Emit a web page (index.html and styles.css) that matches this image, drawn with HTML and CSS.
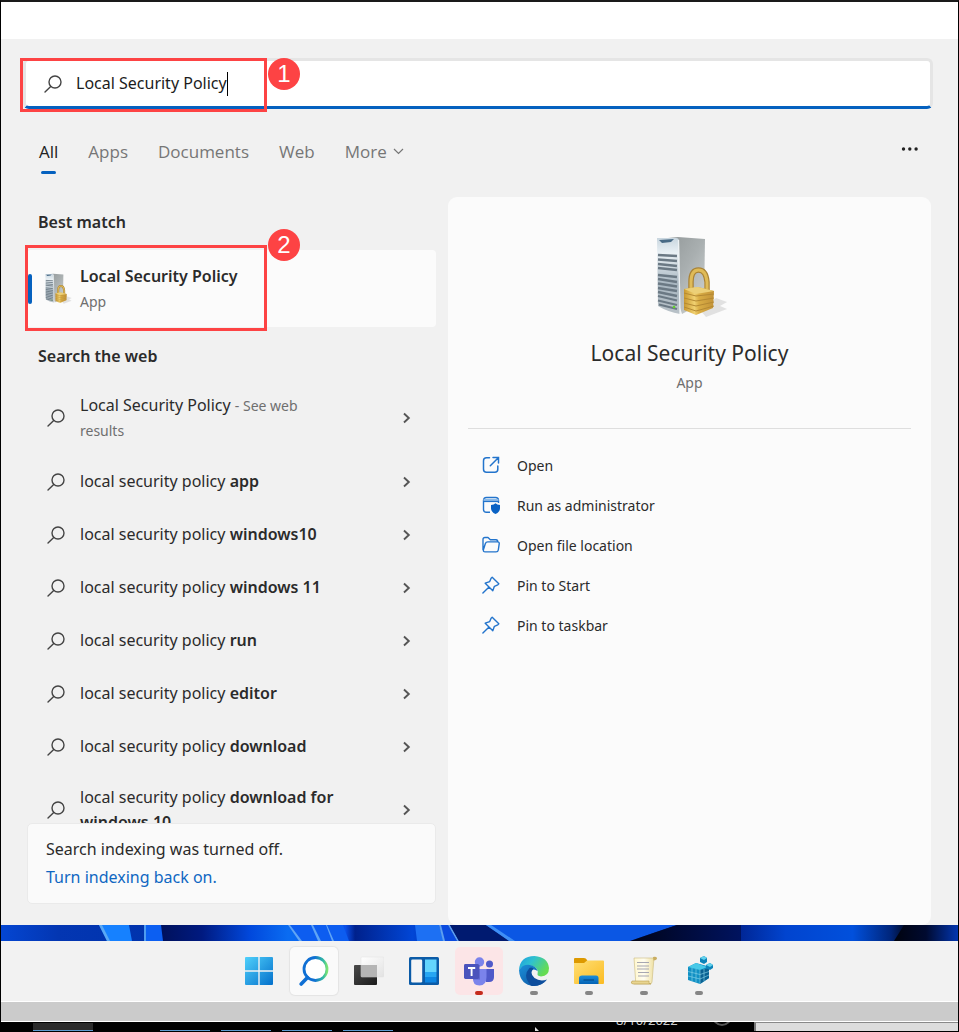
FILE: index.html
```html
<!DOCTYPE html>
<html lang="en">
<head>
<meta charset="utf-8">
<title>Search</title>
<link rel="stylesheet" href="styles.css">
</head>
<body>
<svg class="defs" aria-hidden="true">
  <defs>
    <linearGradient id="gSide" x1="0" y1="0" x2="1" y2="1"><stop offset="0" stop-color="#8d9394"/><stop offset=".5" stop-color="#a9afb0"/><stop offset="1" stop-color="#d3d7d8"/></linearGradient>
    <linearGradient id="gFront" x1="0" y1="0" x2="0" y2="1"><stop offset="0" stop-color="#c9d6df"/><stop offset=".2" stop-color="#eaf1f5"/><stop offset=".6" stop-color="#a9b7c1"/><stop offset="1" stop-color="#b9c2c8"/></linearGradient>
    <linearGradient id="gLock" x1="0" y1="0" x2="1" y2="0"><stop offset="0" stop-color="#c9982f"/><stop offset=".35" stop-color="#f0d070"/><stop offset=".5" stop-color="#d9ad45"/><stop offset="1" stop-color="#c39338"/></linearGradient>
    <linearGradient id="gWin" x1="0" y1="0" x2="1" y2="1"><stop offset="0" stop-color="#4fd0fb"/><stop offset="1" stop-color="#0470cb"/></linearGradient>
    <linearGradient id="gFind" x1="0" y1="0" x2="1" y2="0"><stop offset=".45" stop-color="#0f6fd4"/><stop offset=".85" stop-color="#35bca0"/><stop offset="1" stop-color="#7be374"/></linearGradient>
    <linearGradient id="gDark" x1="0" y1="0" x2="1" y2="1"><stop offset="0" stop-color="#4a4a4a"/><stop offset="1" stop-color="#1b1b1b"/></linearGradient>
    <linearGradient id="gPane" x1="0" y1="0" x2="1" y2="1"><stop offset="0" stop-color="#fff"/><stop offset="1" stop-color="#e2e2e2"/></linearGradient>
    <linearGradient id="gEdgeTop" x1="0" y1="0" x2="1" y2=".5"><stop offset="0" stop-color="#1b9de2"/><stop offset=".45" stop-color="#2fc1cf"/><stop offset="1" stop-color="#66dc52"/></linearGradient>
    <linearGradient id="gEdgeLow" x1="0" y1="0" x2="1" y2="1"><stop offset="0" stop-color="#1b8fd8"/><stop offset="1" stop-color="#0c4f9c"/></linearGradient>
    <linearGradient id="gFolder" x1="0" y1="0" x2="1" y2="1"><stop offset="0" stop-color="#ffdf74"/><stop offset="1" stop-color="#fbbb22"/></linearGradient>
    <linearGradient id="gTray" x1="0" y1="0" x2="0" y2="1"><stop offset="0" stop-color="#1c8edb"/><stop offset="1" stop-color="#0462b4"/></linearGradient>
    <linearGradient id="gPaper" x1="0" y1="0" x2="1" y2="0"><stop offset="0" stop-color="#fff7cf"/><stop offset=".5" stop-color="#fffdf0"/><stop offset="1" stop-color="#efe0a2"/></linearGradient>
    <linearGradient id="gSky" x1="0" y1="0" x2="1" y2="0">
      <stop offset="0" stop-color="#0446d2"/><stop offset=".06" stop-color="#0336b2"/><stop offset=".16" stop-color="#0033ad"/><stop offset=".168" stop-color="#00115c"/><stop offset=".21" stop-color="#001a80"/><stop offset=".26" stop-color="#0148dc"/><stop offset=".3" stop-color="#0a6cf2"/><stop offset=".36" stop-color="#0a4fe8"/><stop offset=".37" stop-color="#00218c"/><stop offset=".43" stop-color="#0146d6"/><stop offset=".48" stop-color="#00218a"/><stop offset=".53" stop-color="#0c62ea"/><stop offset=".66" stop-color="#0a3ecb"/><stop offset=".7" stop-color="#00135c"/><stop offset=".75" stop-color="#00187a"/><stop offset=".82" stop-color="#0144cf"/><stop offset=".89" stop-color="#0150dc"/><stop offset=".93" stop-color="#00257a"/><stop offset=".95" stop-color="#00030f"/><stop offset="1" stop-color="#0336b0"/>
    </linearGradient>
    <linearGradient id="gDusk" x1="0" y1="0" x2="1" y2="0"><stop offset="0" stop-color="#000418"/><stop offset=".5" stop-color="#000b3c"/><stop offset="1" stop-color="#00135f"/></linearGradient>
    <linearGradient id="gNight" x1="0" y1="0" x2="1" y2="0"><stop offset="0" stop-color="#00030f"/><stop offset=".5" stop-color="#000a30"/><stop offset="1" stop-color="#0336b0"/></linearGradient>
    <symbol id="glass" viewBox="0 0 18 18"><g fill="none" stroke="currentColor" stroke-width="1.400" stroke-linecap="round"><circle cx="11" cy="7" r="6"/><path d="M6.700 11.400 1 17"/></g></symbol>
    <symbol id="next" viewBox="0 0 9 12"><path d="M2 1.500 6.800 6 2 10.500" fill="none" stroke="currentColor" stroke-width="1.900"/></symbol>
    <symbol id="server" viewBox="0 0 72 84">
      <path d="M44 74 60 62 71 66 64 70 71 73 50 81Z" fill="#d5d5d5" opacity=".7"/>
      <path d="M2 3 22 1 49 3 48 66 26 78Z" fill="url(#gSide)"/>
      <path d="M1 2 20 2Q23 2 23 5L24 78Q12 76 2 70Z" fill="url(#gFront)"/>
      <path d="M3 4 18 3 15 6 6 7Z" fill="#486a85"/>
      <g stroke="#6b7984" stroke-width="2.300"><path d="M2 19 21 20M2 23.500 21 25M2 28 21 30M2 32 21 34"/><path d="M2 39 21 41M2 43 21 46M2 47.500 21 50.500M2 52 21 55M2 56 21 60M2 60 21 64.500M2 64.500 21 69M3 68.500 21 73"/></g>
      <path d="M22.500 4 24 78" stroke="#eef2f4" stroke-width="1.300"/>
      <circle cx="18" cy="71" r="1.300" fill="#62d22c"/>
      <path d="M35 58V46Q35 34 42.500 34T51 46V56" fill="none" stroke="#a98336" stroke-width="5.500"/>
      <path d="M35 58V46Q35 34 42.500 34T51 46V56" fill="none" stroke="#dfbb58" stroke-width="3"/>
      <path d="M28 53 42 51 58 55 57 72 40 79 28 74Z" fill="url(#gLock)"/>
      <path d="M28 57 40 60 58 58M28 62 40 65 58 62M28 67 40 70 58 66M28 71 40 75 58 70" fill="none" stroke="#b48933" stroke-width="1"/>
      <path d="M28 53 42 51 58 55 40 58Z" fill="#ecd078"/>
    </symbol>
    <symbol id="pin" viewBox="0 0 18 18"><path d="M10.200 1.200 16.800 7.800 15.800 8.900 12.400 10.300 10.800 14.800 3.200 7.200 7.700 5.600 9.100 2.200ZM6.800 11.200.9 17.100" fill="none" stroke="currentColor" stroke-width="1.400" stroke-linejoin="round" stroke-linecap="round"/></symbol>
  </defs>
</svg>

<div class="screen">
  <div class="topstrip"></div>

  <main class="panel">
    <div class="searchwrap">
      <label class="searchbox">
        <svg class="glass"><use href="#glass"/></svg>
        <input class="query" type="text" value="Local Security Policy" aria-label="Search">
        <span class="caret"></span>
      </label>
      <span class="mark mark-search"></span>
      <span class="step step-search">1</span>
    </div>

    <nav class="tabs">
      <button class="tab active">All</button>
      <button class="tab">Apps</button>
      <button class="tab">Documents</button>
      <button class="tab">Web</button>
      <button class="tab">More <svg class="down" viewBox="0 0 11 7"><path d="M1 1 5.500 5.500 10 1" fill="none" stroke="currentColor" stroke-width="1.200"/></svg></button>
      <button class="dots" aria-label="Options"><svg viewBox="0 0 18 4"><circle cx="2.500" cy="2" r="1.700"/><circle cx="8.800" cy="2" r="1.700"/><circle cx="15.100" cy="2" r="1.700"/></svg></button>
    </nav>

    <div class="columns">
      <section class="left">
        <h2 class="heading">Best match</h2>
        <div class="best">
          <button class="bestitem">
            <svg class="smallserver"><use href="#server"/></svg>
            <span class="besttext"><strong>Local Security Policy</strong><small>App</small></span>
          </button>
          <span class="mark mark-best"></span>
          <span class="step step-best">2</span>
        </div>
        <h2 class="heading">Search the web</h2>
        <div class="results">
          <button class="row"><svg class="glass"><use href="#glass"/></svg><span>Local Security Policy <small>- See web results</small></span><svg class="next"><use href="#next"/></svg></button>
          <button class="row"><svg class="glass"><use href="#glass"/></svg><span>local security policy <b>app</b></span><svg class="next"><use href="#next"/></svg></button>
          <button class="row"><svg class="glass"><use href="#glass"/></svg><span>local security policy <b>windows10</b></span><svg class="next"><use href="#next"/></svg></button>
          <button class="row"><svg class="glass"><use href="#glass"/></svg><span>local security policy <b>windows 11</b></span><svg class="next"><use href="#next"/></svg></button>
          <button class="row"><svg class="glass"><use href="#glass"/></svg><span>local security policy <b>run</b></span><svg class="next"><use href="#next"/></svg></button>
          <button class="row"><svg class="glass"><use href="#glass"/></svg><span>local security policy <b>editor</b></span><svg class="next"><use href="#next"/></svg></button>
          <button class="row"><svg class="glass"><use href="#glass"/></svg><span>local security policy <b>download</b></span><svg class="next"><use href="#next"/></svg></button>
          <button class="row"><svg class="glass"><use href="#glass"/></svg><span>local security policy <b>download for windows 10</b></span><svg class="next"><use href="#next"/></svg></button>
        </div>
        <div class="notice">
          <p>Search indexing was turned off.</p>
          <a href="#">Turn indexing back on.</a>
        </div>
      </section>

      <section class="card">
        <svg class="bigserver"><use href="#server"/></svg>
        <h1>Local Security Policy</h1>
        <p class="kind">App</p>
        <div class="actions">
          <button class="action"><svg viewBox="0 0 18 18"><path d="M7.500 1.700H4.500Q1.500 1.700 1.500 4.700V13.200Q1.500 16.200 4.500 16.200H12.800Q15.800 16.200 15.800 13.200V10M11 1.500H16.500V7M16.300 1.700 8.300 9.700" fill="none" stroke="currentColor" stroke-width="1.500" stroke-linecap="round"/></svg>Open</button>
          <button class="action"><svg viewBox="0 0 18 18"><path d="M8 16.300H4.400Q1.500 16.300 1.500 13.400V4.400Q1.500 1.500 4.400 1.500H13.600Q16.500 1.500 16.500 4.400V7" fill="none" stroke="currentColor" stroke-width="1.400"/><path d="M1.500 4H16.500" stroke="#8dbbe8" stroke-width="2"/><path d="M1.500 5.500H16.500" stroke="currentColor" stroke-width="1.200"/><path d="M13.500 7.300Q15 8.800 18 9V12Q18 16 13.500 18Q9 16 9 12V9Q12 8.800 13.500 7.300Z" fill="#0a62c4"/></svg>Run as administrator</button>
          <button class="action"><svg viewBox="0 0 18 18"><path d="M1 14V3.500Q1 1.500 3 1.500H6L8.300 3.700H14Q15.800 3.700 15.800 5.900M5.800 5.900H15.500Q17.500 5.900 17.200 7.800L16.300 14Q16 15.900 14 15.900H3.200Q1 15.900 1.400 13.700L3.300 7.800Q3.900 5.900 5.800 5.900Z" fill="none" stroke="currentColor" stroke-width="1.400" stroke-linejoin="round"/></svg>Open file location</button>
          <button class="action"><svg><use href="#pin"/></svg>Pin to Start</button>
          <button class="action"><svg><use href="#pin"/></svg>Pin to taskbar</button>
        </div>
      </section>
    </div>
  </main>

  <svg class="wallpaper" viewBox="0 0 957 16" preserveAspectRatio="none">
    <rect width="957" height="16" fill="url(#gSky)"/>
    <path d="M98 0H128L131 16H106Z" fill="#1681ff"/><path d="M98 0H101L109 16H106Z" fill="#5aa8f4"/>
    <path d="M143 0H160L162 16H143Z" fill="#0c5ff2"/><path d="M143 0H145V16H143Z" fill="#4f9cf0"/>
    <path d="M287 0H342L348 16H299Z" fill="#0d5df0"/><path d="M287 0H289L301 16H298ZM310 0H312L320 16H317ZM325 0H326L333 16H331Z" fill="#60a5f5"/>
    <path d="M414 0H438L443 16H416Z" fill="#1d70f3"/><path d="M438 0H447L456 16H443Z" fill="#0a4adf"/><path d="M438 0H440L444 16H442ZM447 0H449L458 16H456Z" fill="#5d9ff0"/>
    <path d="M449 0H485L509 16H458Z" fill="#001a70"/>
    <path d="M485 0H676Q655 7 629 16H509Z" fill="#0b57e4"/><path d="M485 0H490L514 16H508Z" fill="#3f8ff5"/>
    <path d="M676 0H740V16H629Q655 7 676 0Z" fill="url(#gDusk)"/>
    <path d="M903 0H957V16H893Z" fill="url(#gNight)"/>
  </svg>

  <footer class="taskbar">
    <button class="task" aria-label="Start"><svg viewBox="0 0 30 30"><path d="M1 2Q1 1 2 1H14.300V14.300H1ZM15.700 1H28Q29 1 29 2V14.300H15.700ZM1 15.700H14.300V29H2Q1 29 1 28ZM15.700 15.700H29V28Q29 29 28 29H15.700Z" fill="url(#gWin)"/></svg></button>
    <button class="task lit" aria-label="Search"><svg viewBox="0 0 30 30"><circle cx="16.500" cy="13" r="11.500" fill="#fff" stroke="url(#gFind)" stroke-width="2.800"/><path d="M8.500 21.500 2.200 28" stroke="#0f6fd4" stroke-width="3.600" stroke-linecap="round"/></svg></button>
    <button class="task" aria-label="Task view"><svg viewBox="0 0 30 30"><rect x="0" y="9" width="23" height="20" rx="1" fill="url(#gDark)"/><rect x="7" y="1" width="23" height="20" rx="1" fill="url(#gPane)" stroke="#e0e0e0" stroke-width=".5"/><path d="M7 9H23V21H7Z" fill="#b5b5b5"/></svg></button>
    <button class="task" aria-label="Widgets"><svg viewBox="0 0 30 30"><rect x="0" y="1" width="30" height="28" rx="1.500" fill="#0b5ba7"/><rect x="2.200" y="3.500" width="11" height="23" rx="1.300" fill="#f5f5f5"/><path d="M16 3.500H27.500V16H16Z" fill="#64d5fd"/><path d="M16 16H27.500V21H16Z" fill="#26a6f3"/><path d="M16 21H27.500V26.500H16Z" fill="#0d86e3"/></svg></button>
    <button class="task alert" aria-label="Teams"><svg viewBox="0 0 32 30"><circle cx="26.500" cy="8" r="3.500" fill="#5059c9"/><path d="M23 13H31V21Q31 26 26 26H23Z" fill="#5059c9"/><circle cx="16.500" cy="6" r="4.700" fill="#7b83eb"/><path d="M10 13H23.500V21Q23.500 29.500 16.500 29.500T10 22Z" fill="#7b83eb"/><path d="M10 9H17V23.500H10Z" fill="#464eb8" opacity=".5"/><rect x="1" y="8" width="15" height="15" rx="1.400" fill="#4b53bc"/><path d="M5 12H12.200M8.600 12V20" stroke="#fff" stroke-width="1.900"/></svg></button>
    <button class="task open" aria-label="Edge"><svg viewBox="0 0 30 30"><path d="M0 14Q1 0 15.500 0Q29 1 30 12Q30 20 22 20.500Q17.500 20 18.700 17Q19.500 12.500 14 10Q5 8 0 14Z" fill="url(#gEdgeTop)"/><path d="M0 14Q4 8 11 9Q17 10 18.700 15Q13 11 12 17Q13 25 21 26.500Q25 27 28 23.500Q23 30 15 30Q1 29 0 14Z" fill="url(#gEdgeLow)"/><path d="M10.500 12Q3 20 12 29.700Q22 31 28 23.500Q21 26 15.500 22Q10 17.500 14.500 12.200Q12 11 10.500 12Z" fill="#0d4e9d"/></svg></button>
    <button class="task open" aria-label="File Explorer"><svg viewBox="0 0 30 30"><path d="M0 3Q0 2 1 2H10Q12 2 13 4L14 7H0Z" fill="#dd9900"/><path d="M0 7H10L13 4.500H29Q30 4.500 30 5.500V27Q30 28 29 28H1Q0 28 0 27Z" fill="url(#gFolder)"/><path d="M5 28V22Q5 19.500 8 19.500H22Q24.500 19.500 24.500 22V28Z" fill="url(#gTray)"/><path d="M9.500 24H20" stroke="#064b8d" stroke-width="1.200"/></svg></button>
    <button class="task open" aria-label="Notes"><svg viewBox="0 0 30 30"><path d="M5 2H25L23 26Q23 28 20 28H5Q7 26 6.500 23Z" fill="url(#gPaper)" stroke="#c9b87c" stroke-width=".6"/><path d="M24 1Q27 0 28 2Q28 4 24.500 4.500Z" fill="#c9ad61"/><path d="M3 25H20Q19 28 22 28H4Q1 27.500 3 25Z" fill="#e8d591" stroke="#b89c4c" stroke-width=".6"/><path d="M8 6.500H20M8 10H20M8 13H20M9 16.500H20M9 20H20" stroke="#a7a7b1" stroke-width="1"/></svg></button>
    <button class="task open" aria-label="Registry Editor"><svg viewBox="0 0 30 30"><path d="M4 11 12 7 23 10 25 13 25 22 16 28 4 24Z" fill="#1290c4"/><path d="M4 11 12 7 23 11 16 14Z" fill="#48c9e8"/><path d="M16 14 25 12V22L16 28Z" fill="#0a6293"/><path d="M4 15.500 16 18.500 25 15.500M4 20 16 23 25 19M8 12V25.500M12 13V26.500M16 14V28M20 13V25.500" fill="none" stroke="#8fd8ec" stroke-width=".6"/><path d="M16 2 20 0 23 2V6L20 8 16 6Z" fill="#0d83b9"/><path d="M16 2 20 0 23 2 20 4Z" fill="#63d2ed"/><path d="M22 9 26 7 29 9V12L26 14 22 12Z" fill="#0d83b9"/><path d="M22 9 26 7 29 9 26 11Z" fill="#63d2ed"/></svg></button>
  </footer>

  <div class="band"></div>

  <div class="desk">
    <div class="deskapps"><i class="app current"></i><i class="app"></i><i class="app"></i><i class="app"></i><i class="app"></i></div>
    <svg class="pointer" viewBox="0 0 4 4"><path d="M0 0 4 4H0Z" fill="#ddd"/></svg>
    <span class="date">8/10/2022</span>
    <span class="ring"></span>
    <div class="window"></div>
  </div>
</div>
</body>
</html>
```

FILE: styles.css
```css
* { box-sizing: border-box; }

body {
  margin: 0;
  background: #000;
  color: #2b2b2b;
  font-family: "Noto Sans", "Open Sans", sans-serif;
  font-size: 16px;
  line-height: 25px;
}

button {
  margin: 0;
  padding: 0;
  border: 0;
  background: none;
  color: inherit;
  font: inherit;
  text-align: left;
}

h1, h2, p { margin: 0; }
svg { display: block; }
.defs { position: absolute; width: 0; height: 0; }

.screen {
  display: flex;
  flex-direction: column;
  height: 100vh;
  border: 1px solid #000;
  border-top: 2px solid #1a1a1a;
}

.topstrip { flex: 0 0 37px; background: #fff; }

.panel {
  flex: 1;
  min-height: 0;
  display: flex;
  flex-direction: column;
  padding: 19px 27px 0 26px;
  background: #f1f1f1;
}

/* Search field */
.searchwrap { position: relative; margin: 0 -2px 0 -4px; }
.searchbox {
  display: flex;
  align-items: center;
  height: 51px;
  padding-left: 18px;
  border: 3px solid #e5e5e5;
  border-bottom-color: #0561bf;
  border-radius: 6px;
  background: #fff;
}
.glass { width: 18px; height: 18px; color: #444; }
.query {
  field-sizing: content;
  margin-left: 14px;
  padding: 0;
  border: 0;
  outline: 0;
  background: none;
  color: #1c1c1c;
  font: inherit;
}
.caret { width: 1px; height: 24px; background: #000; }

/* Numbered callouts */
.mark { position: absolute; border: 3px solid #fd4344; pointer-events: none; }
.mark-search { left: -3px; top: 0; width: 247px; height: 54px; }
.mark-best { left: -2px; top: -5px; width: 242px; height: 86px; }
.step {
  position: absolute;
  width: 32px;
  height: 32px;
  border-radius: 50%;
  background: #fd4344;
  color: #fff;
  font: 24px/32px "Liberation Sans", Arial, sans-serif;
  text-align: center;
}
.step-search { left: 245px; top: 0; }
.step-best { left: 241px; top: -21px; }

/* Filter tabs */
.tabs { display: flex; gap: 30px; margin-top: 26px; padding: 0 12px; }
.tab {
  display: flex;
  align-items: center;
  gap: 6px;
  position: relative;
  height: 40px;
  padding-bottom: 8px;
  color: #767676;
  font-family: "Open Sans", "Noto Sans", sans-serif;
  font-size: 17px;
}
.active { color: #222; }
.active::after {
  content: "";
  position: absolute;
  left: 2px;
  right: 2px;
  bottom: 1px;
  height: 3px;
  border-radius: 2px;
  background: #0561bf;
}
.down { width: 11px; height: 7px; }
.dots { margin-left: auto; padding-bottom: 12px; }
.dots svg { width: 18px; height: 4px; fill: #222; }

.columns {
  flex: 1;
  min-height: 0;
  display: grid;
  grid-template-columns: 409fr 483fr;
  grid-template-rows: minmax(0, 1fr);
  gap: 12px;
  margin-top: 22px;
}

/* Result list */
.left { display: flex; flex-direction: column; padding: 13px 0 21px; }
.heading { padding-left: 11px; font-size: 16px; font-weight: 600; }
.best { position: relative; margin: 15px 0 17px; }
.bestitem {
  display: flex;
  align-items: center;
  width: 100%;
  height: 77px;
  padding-left: 18px;
  border-radius: 4px;
  background: #fbfbfb;
}
.bestitem::before {
  content: "";
  position: absolute;
  left: 1px;
  width: 4px;
  height: 30px;
  border-radius: 2px;
  background: #0561bf;
}
.smallserver { width: 27px; height: 32px; }
.besttext { display: grid; margin-left: 8px; }
.besttext strong { font-weight: 600; }
small { color: #6f6f6f; font-size: 14px; }

.results { flex: 1; min-height: 0; margin-top: 12px; overflow: hidden; }
.row {
  display: grid;
  grid-template-columns: 18px 1fr 9px;
  align-items: center;
  width: 100%;
  min-height: 53px;
  padding: 12px 25px 12px 20px;
}
.row span { padding: 0 62px 0 15px; }
.row b { font-weight: 600; }
.next { width: 9px; height: 12px; color: #555; }

.notice {
  height: 81px;
  padding: 11px 18px;
  border: 1px solid #eaeaea;
  border-radius: 5px;
  background: #fafafa;
  line-height: 28px;
}
.notice a { color: #0f67c2; text-decoration: none; }

/* Preview card */
.card {
  display: flex;
  flex-direction: column;
  align-items: center;
  padding: 39px 20px 0;
  border-radius: 9px;
  background: #fbfbfb;
}
.bigserver { width: 72px; height: 84px; margin-left: 4px; }
.card h1 { margin-top: 17px; font-size: 21px; font-weight: 400; line-height: 32px; }
.kind { margin-top: 2px; color: #6f6f6f; font-size: 14px; line-height: 24px; }
.actions {
  align-self: stretch;
  margin-top: 33px;
  padding: 16px 14px;
  border-top: 1px solid #dedede;
}
.action {
  display: flex;
  align-items: center;
  gap: 17px;
  width: 100%;
  height: 40px;
  font-size: 14px;
}
.action svg { width: 18px; height: 18px; color: #2374cc; }

/* Desktop and taskbar */
.wallpaper { flex: 0 0 16px; width: 100%; height: 16px; }
.taskbar {
  flex: 0 0 61px;
  display: flex;
  justify-content: center;
  gap: 7px;
  padding: 6px 2px 0 0;
  border-bottom: 1px solid #fff;
  background: #f2f2f2;
}
.task {
  position: relative;
  display: grid;
  place-items: center;
  width: 48px;
  height: 48px;
  border-radius: 5px;
}
.task svg { width: 30px; height: 30px; }
.lit { background: #fafafa; box-shadow: 0 0 1px 1px #e4e4e4; }
.alert { background: #fce5e7; }
.task.alert svg { width: 32px; }
.open::after, .alert::after {
  content: "";
  position: absolute;
  left: 20px;
  bottom: 0;
  width: 8px;
  height: 4px;
  border-radius: 2px;
  background: #868686;
}
.alert::after { background: #c42b1c; }
.band { flex: 0 0 20px; border-bottom: 1px solid #fff; background: #cbcbcb; }

.desk { flex: 0 0 9px; display: flex; align-items: flex-end; overflow: hidden; }
.deskapps { display: flex; gap: 11px; flex: 0 0 534px; height: 8px; padding-left: 32px; }
.app { width: 50px; height: 8px; border-bottom: 1px solid #5b9bd0; }
.current { width: 60px; margin-right: 56px; background: #2a2a2a; }
.pointer { width: 4px; height: 4px; }
.date {
  margin-left: 77px;
  padding-bottom: 4px;
  color: #ccc;
  font-size: 13px;
  line-height: 13px;
}
.ring {
  width: 20px;
  height: 20px;
  flex: none;
  margin: 0 22px 5px auto;
  border: 2px solid #555;
  border-radius: 50%;
}
.window { flex: 0 0 204px; height: 9px; border-top: 1px solid #888; border-left: 2px solid #777; background: #dcdcdc; }
```
